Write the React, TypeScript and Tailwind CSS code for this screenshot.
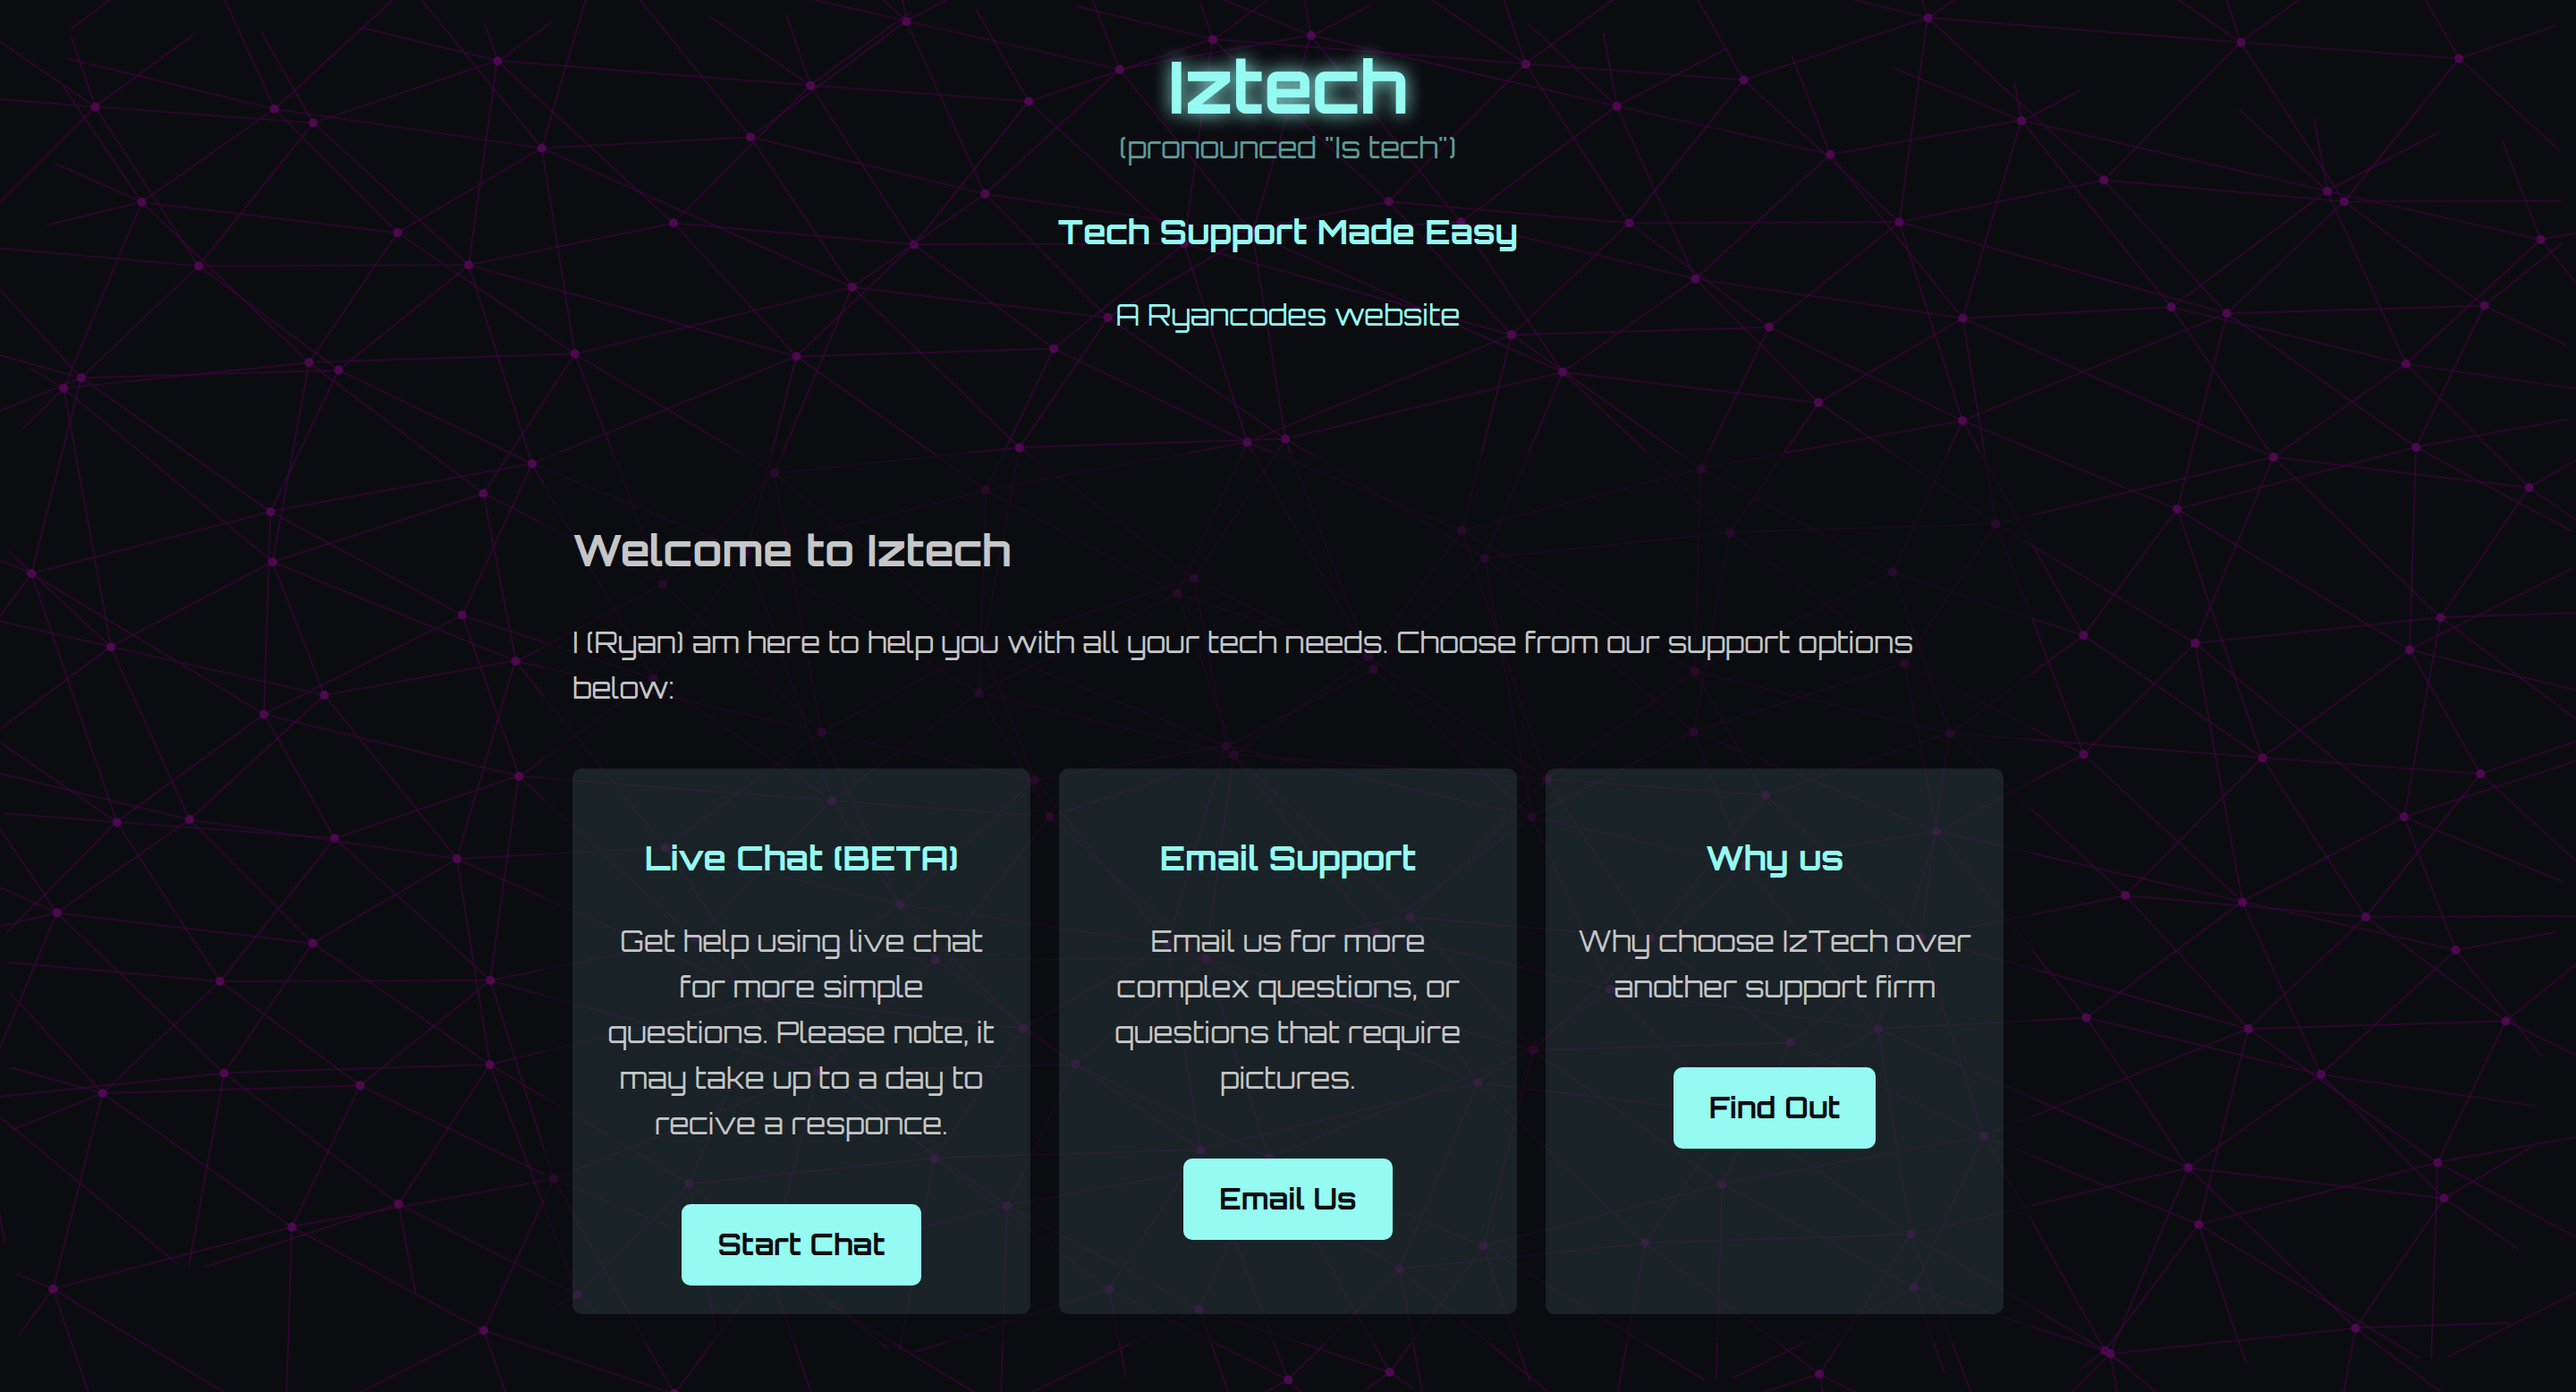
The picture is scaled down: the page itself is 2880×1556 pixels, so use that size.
import React from "react";

const NODES: [number, number][] = [
  [769, 229], [539, 269], [603, 493], [731, 737], [520, 660], [309, 538], [295, 764],
  [40, 599], [102, 382], [127, 80], [370, 105], [578, 42], [237, 261], [390, 382],
];

function Mesh({ id, rotate }: { id: string; rotate: string }) {
  return (
    <svg aria-hidden="true" className={`absolute inset-0 h-full w-full ${rotate}`}>
      <defs>
        <pattern id={id} width="800" height="800" patternUnits="userSpaceOnUse">
          <g fill="none" stroke="#404" strokeWidth="1.25">
            <path d="M769 229L1037 260.9M927 880L731 737 520 660 309 538 40 599 295 764 126.5 879.5 40 599-197 493 102 382-31 229 126.5 79.5-69-63" />
            <path d="M-31 229L237 261 390 382 603 493 308.5 537.5 101.5 381.5M370 905L295 764" />
            <path d="M520 660L578 842 731 737 840 599 603 493 520 660 295 764 309 538 390 382 539 269 769 229 577.5 41.5 370 105 295 -36 126.5 79.5 237 261 102 382 40 599 -69 737 127 880" />
            <path d="M520-140L578.5 42.5 731-63M603 493L539 269 237 261 370 105M902 382L539 269M390 382L102 382" />
            <path d="M-222 42L126.5 79.5 370 105 539 269 577.5 41.5 927 80 769 229 902 382 603 493 731 737M295-36L577.5 41.5M578 842L295 764M40-201L127 80M102 382L-261 269" />
          </g>
          <g fill="#550858">
            {NODES.map(([x, y]) => (
              <circle key={`${x}-${y}`} cx={x} cy={y} r="5" />
            ))}
          </g>
        </pattern>
      </defs>
      <rect width="100%" height="100%" fill={`url(#${id})`} />
    </svg>
  );
}

const CARDS = [
  {
    title: "Live Chat (BETA)",
    text: "Get help using live chat for more simple questions. Please note, it may take up to a day to recive a responce.",
    action: "Start Chat",
  },
  {
    title: "Email Support",
    text: "Email us for more complex questions, or questions that require pictures.",
    action: "Email Us",
  },
  { title: "Why us", text: "Why choose IzTech over another support firm", action: "Find Out" },
];

export default function App() {
  return (
    <div className="relative min-h-screen overflow-hidden bg-[#0b0c10] font-['Orbitron','DejaVu_Sans',sans-serif] text-[32px] leading-[51px] text-[#c5c6c7]">
      <div className="absolute inset-0 opacity-90">
        <Mesh id="mesh-a" rotate="rotate-[-1.72deg]" />
        <Mesh id="mesh-b" rotate="rotate-[6.82deg]" />
      </div>

      <div className="relative">
        <header className="flex flex-col items-center pt-13 text-center text-[#95faf1]">
          <h1 className="text-[80px] leading-[88px] font-bold [text-shadow:0_0_20px_#95faf1]">Iztech</h1>
          <p className="opacity-60">(pronounced "Is tech")</p>
          <p className="mt-[38px] text-[37px] leading-[60px] font-bold">Tech Support Made Easy</p>
          <p className="mt-[38px]">A Ryancodes website</p>
        </header>

        <main className="mx-auto mt-32 max-w-[1664px] bg-[#0b0c10]/55 p-8">
          <h2 className="mt-[38px] text-[48px] leading-[77px] font-bold">Welcome to Iztech</h2>
          <p className="mt-10">
            I (Ryan) am here to help you with all your tech needs. Choose from our support options below:
          </p>
          <div className="mt-16 grid grid-cols-3 gap-8">
            {CARDS.map((card) => (
              <section
                key={card.title}
                className="flex flex-col items-center rounded-[10px] bg-[#a5f0e8]/10 p-8 text-center"
              >
                <h3 className="mt-[38px] text-[37px] leading-[60px] font-bold text-[#95faf1]">{card.title}</h3>
                <p className="mt-[38px]">{card.text}</p>
                <button
                  type="button"
                  className="mt-16 rounded-[10px] bg-[#95faf1] px-10 py-5 font-bold text-[#0b0c10]"
                >
                  {card.action}
                </button>
              </section>
            ))}
          </div>
        </main>
      </div>
    </div>
  );
}
